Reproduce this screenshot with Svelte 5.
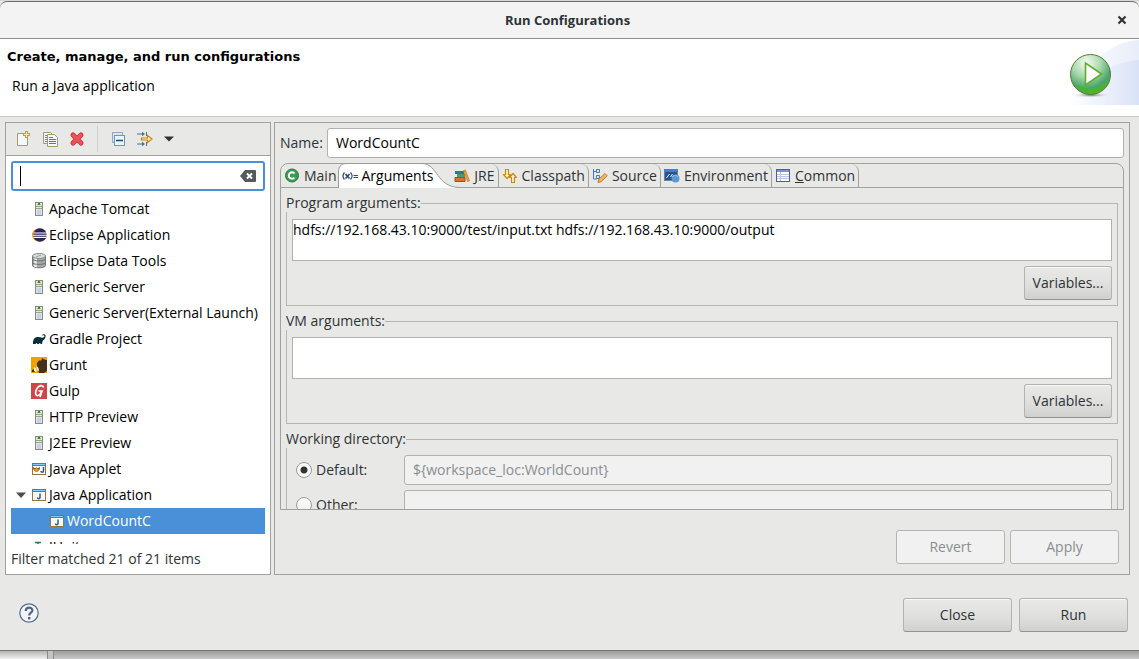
<script>
  const tree = [
    { label: 'Apache Tomcat', icon: 'server' },
    { label: 'Eclipse Application', icon: 'eclipse' },
    { label: 'Eclipse Data Tools', icon: 'database' },
    { label: 'Generic Server', icon: 'server' },
    { label: 'Generic Server(External Launch)', icon: 'server' },
    { label: 'Gradle Project', icon: 'gradle' },
    { label: 'Grunt', icon: 'grunt' },
    { label: 'Gulp', icon: 'gulp' },
    { label: 'HTTP Preview', icon: 'server' },
    { label: 'J2EE Preview', icon: 'server' },
    { label: 'Java Applet', icon: 'applet' },
    { label: 'Java Application', icon: 'java', open: true },
    { label: 'WordCountC', icon: 'java', child: true, selected: true },
    { label: 'JUnit', icon: 'junit' }
  ];
  const tabs = [
    { label: 'Main', icon: 'main' },
    { label: 'Arguments', icon: 'args', selected: true },
    { label: 'JRE', icon: 'jre' },
    { label: 'Classpath', icon: 'classpath' },
    { label: 'Source', icon: 'source' },
    { label: 'Environment', icon: 'environment' },
    { label: 'Common', icon: 'common', mnemonic: true }
  ];
  let filter = $state('');
  let name = $state('WordCountC');
  let programArgs = $state('hdfs://192.168.43.10:9000/test/input.txt hdfs://192.168.43.10:9000/output');
  let vmArgs = $state('');
  let directory = $state('default');
</script>

{#snippet icon(kind)}
  <svg class="icon" width="16" height="16" viewBox="0 0 16 16" aria-hidden="true">
    {#if kind === 'server'}
      <rect x="4.500" y="1.500" width="7" height="13" fill="#e4e6dc" stroke="#86906f" />
      <path d="M5 5.500h6M5 7.500h6" stroke="#98a08a" />
      <path d="M6 3.500h4" stroke="#a8ada0" />
      <rect x="7" y="2" width="2" height="2" fill="#12a02c" />
      <rect x="6" y="9" width="4" height="5" fill="#c3cff5" />
    {:else if kind === 'eclipse'}
      <circle cx="7.500" cy="8" r="6.500" fill="#f7941e" />
      <circle cx="9" cy="8" r="6.700" fill="#2c2255" />
      <path d="M2.500 6h13M2 8.200h14M2.500 10.400h13" stroke="#fff" stroke-width="1.100" />
    {:else if kind === 'database'}
      <path d="M1.500 3v9.500c0 3 13 3 13 0V3" fill="#a8a8a8" stroke="#777" />
      <path d="M4.500 5v9" stroke="#eee" stroke-width="2.500" />
      <path d="M1.500 6c0 2.500 13 2.500 13 0M1.500 9.500c0 2.500 13 2.500 13 0" fill="none" stroke="#6f6f6f" />
      <ellipse cx="8" cy="3" rx="6.500" ry="2.500" fill="#d8dedb" stroke="#8b8b8b" />
      <path d="M5 4l5-2" stroke="#74b5a5" />
    {:else if kind === 'gradle'}
      <path d="M2 13c-.3-4 1-6.500 4-7 2-.3 3.500.2 5 .8 2-.3 3-1.300 2.200-2.400-.5-.5-1.200-.2-1.500.2l-.7-.6c1-1.400 3.500-1.100 3.600.9 0 2.700-1.600 3.600-3 5.100-.4 1-.3 2-.6 3H9.600c-.2-1.400-1.400-1.400-1.600 0H6.300c-.2-1.400-1.400-1.400-1.600 0z" fill="#02303a" />
    {:else if kind === 'grunt'}
      <rect width="16" height="16" fill="#eda300" />
      <path d="M16 3v11l-3 2H8L6 10V6l2-2.500 2 0L11.500 1l1.500 1.500z" fill="#46301a" />
      <path d="M1 13l2-1 1 3H1z" fill="#46301a" />
      <path d="M3 10l2 1.500.5 3.500-2.500-1zM5.500 9c2 1 3 3.500 2 5.500l-1.500-2z" fill="#fff4d8" />
    {:else if kind === 'gulp'}
      <rect width="16" height="16" fill="#cf4646" />
      <path d="M12.500 4.500C12 1.500 8 2 6 5.500c-2.500 4-1.500 7.500 1 7 2-.4 3-2.500 4-4.500H7.500M11 8l-2 6" fill="none" stroke="#fff" stroke-width="1.700" />
    {:else if kind === 'java'}
      <rect x="1.500" y="2.500" width="13" height="11" fill="#f5faff" stroke="#937838" />
      <path d="M1 2h14v3H1z" fill="#2f86cf" /><path d="M2 3.500h12" stroke="#8bc8f5" />
      <path d="M9 6.500v4c0 1.500-2.500 1.500-2.500 0" fill="none" stroke="#21618f" stroke-width="1.500" />
    {:else if kind === 'applet'}
      <rect x="1.500" y="2.500" width="13" height="11" fill="#f5faff" stroke="#937838" />
      <path d="M1 2h14v3H1z" fill="#2f86cf" /><path d="M2 3.500h12" stroke="#8bc8f5" />
      <path d="M12.500 6v4c0 1.500-2.500 1.500-2.500 0" fill="none" stroke="#21618f" stroke-width="1.500" />
      <path d="M2.500 6.500c0 5 6 5 6 0l-1.500 1.500-1.500-1-1.500 1z" fill="#f5b429" stroke="#85500e" />
    {:else if kind === 'junit'}
      <path d="M4 3.500h6M7 3v9" stroke="#1c8050" stroke-width="1.500" />
    {:else if kind === 'main'}
      <circle cx="8" cy="7.500" r="6.500" fill="#3a9a50" stroke="#23793e" />
      <path d="M10.500 5.500a3.200 3.200 0 1 0 0 4" fill="none" stroke="#fff" stroke-width="2" />
    {:else if kind === 'args'}
      <path d="M2.500 4.500c-2 2-2 5 0 7M8.500 4.500c2 2 2 5 0 7" fill="none" stroke="#314a7c" stroke-width="1.300" />
      <path d="M3.500 6l4 4.500M7.500 6l-4 4.500" stroke="#314a7c" stroke-width="1.700" />
      <path d="M11.500 7.500H16M11.500 9.500H16" stroke="#314a7c" />
    {:else if kind === 'jre'}
      <path d="M1 3h9v3H1z" fill="#27789a" /><path d="M3 6h8v3H3z" fill="#4a9a6c" />
      <path d="M1 9.500h10v4H1z" fill="#d96f32" stroke="#9f4c22" />
      <path d="M9.500 2.500l2-.5 4 11-2 .5z" fill="#f0a02e" stroke="#c0761f" stroke-width=".6" />
    {:else if kind === 'classpath'}
      <path d="M3.500 1.500h3v5h2L5 10.500 1.500 6.500h2zM9.500 14.500h3v-5h2L11 5.500 7.500 9.500h2z" fill="#fff0b8" stroke="#c48a1c" stroke-width="1.200" stroke-linejoin="round" />
    {:else if kind === 'source'}
      <path d="M1.500 1v10H5M1.500 3.500H5" fill="none" stroke="#4b76b5" />
      <path d="M4.500 1.500h3v3h-3zM4.500 7.500h3v3h-3z" fill="#dbe9fb" stroke="#4b76b5" />
      <path d="M6 14.500l1-3.500 6-5.500 2.200 2.200-6 6z" fill="#f2b563" stroke="#c27a2d" />
    {:else if kind === 'environment'}
      <rect x=".5" y="1.500" width="13" height="11" fill="#28538b" stroke="#6f8195" />
      <path d="M0 1h14v3H0z" fill="#477fc1" /><path d="M2.500 10l3-4M6.500 9l2-3" stroke="#e2edf8" />
      <circle cx="11.500" cy="10.500" r="4" fill="#5d96d2" /><path d="M8 9c2-2 5-2 6 0" fill="none" stroke="#9cc5eb" />
    {:else if kind === 'common'}
      <rect x="1.500" y="1.500" width="13" height="12" fill="#fff" stroke="#4c608e" />
      <path d="M2 2h12v2H2z" fill="#7c96c4" /><path d="M2 6.500h12M2 8.500h12M2 10.500h12M5.500 4v9" stroke="#b9c6dd" />
    {:else if kind === 'new'}
      <path d="M2.500 2.500h7l3 3v9h-10z" fill="#f3f8ff" stroke="#a99a6b" />
      <path d="M11.500 0v7M8 3.500h7" stroke="#c89f36" stroke-width="3" /><path d="M11.500 1v5M9 3.500h5" stroke="#fff3b8" />
    {:else if kind === 'copy'}
      <path d="M1.500 1.500h7l2 2v9h-9z" fill="#f3f8ff" stroke="#a99a6b" /><path d="M3 4.500h3M3 6.500h3M3 8.500h3M3 10.500h3" stroke="#6384ad" />
      <path d="M5.500 3.500h7l3 3v9h-10z" fill="#f3f8ff" stroke="#a99a6b" /><path d="M7 6.500h4M7 8.500h7M7 10.500h7M7 12.500h7" stroke="#57779f" />
    {:else if kind === 'delete'}
      <path d="M4 4l8 8M12 4l-8 8" stroke="#c92f38" stroke-width="5" stroke-linecap="round" /><path d="M4 4l8 8M12 4l-8 8" stroke="#ec5359" stroke-width="3.200" stroke-linecap="round" />
    {:else if kind === 'collapse'}
      <rect x="2.500" y="1.500" width="10" height="10" fill="#dbe5f4" stroke="#92a8c8" />
      <rect x="4.500" y="4.500" width="10" height="10" fill="#e9f8ff" stroke="#7792b8" /><path d="M6 9.500h7" stroke="#164d7c" stroke-width="1.500" />
    {:else if kind === 'filter'}
      <path d="M0 3h6M0 13h6" stroke="#46708d" /><path d="M5 .8L8 3 5 5.200zM5 10.800L8 13l-3 2.200z" fill="#46708d" /><path d="M9.500 1v4M9.500 11v4" stroke="#46708d" />
      <path d="M4.500 7h6V4.500L15 8l-4.500 3.500V9h-6z" fill="#fff0af" stroke="#c4851b" stroke-width="1.200" />
    {/if}
  </svg>
{/snippet}

<div class="screen">
  <main class="window">
    <header class="titlebar">
      <h1>Run Configurations</h1>
      <button class="close" aria-label="Close window"><svg width="10" height="10" viewBox="0 0 10 10" aria-hidden="true"><path d="M1.500 1.500l7 7M8.500 1.500l-7 7" stroke="#2e3436" stroke-width="2.200" /></svg></button>
    </header>

    <section class="banner">
      <div class="banner-text">
        <h2>Create, manage, and run configurations</h2>
        <p>Run a Java application</p>
      </div>
      <svg class="banner-art" width="75" height="66" viewBox="0 0 75 66" aria-hidden="true">
        <defs>
          <linearGradient id="sky"><stop offset="0" stop-color="#fff" /><stop offset="1" stop-color="#d5dff5" /></linearGradient>
          <radialGradient id="ball" cx=".4" cy=".2" r=".8"><stop offset="0" stop-color="#f4fbef" /><stop offset=".45" stop-color="#a8d8ac" /><stop offset=".8" stop-color="#4ba56a" /><stop offset="1" stop-color="#4fb52e" /></radialGradient>
          <radialGradient id="shade"><stop offset="0" stop-color="#75656f" /><stop offset="1" stop-color="#fff" stop-opacity="0" /></radialGradient>
        </defs>
        <path d="M4 66C15 30 45 2 75 1v65z" fill="url(#sky)" opacity=".55" />
        <path d="M4 66C28 36 50 22 75 21v45z" fill="url(#sky)" opacity=".8" />
        <ellipse cx="27" cy="56" rx="20" ry="3" fill="url(#shade)" />
        <circle cx="26.500" cy="35.500" r="20" fill="url(#ball)" stroke="#587c2f" />
        <path d="M10 43a18 18 0 0 0 33 0c-8 9-25 9-33 0z" fill="#43b91f" opacity=".65" />
        <path d="M21.500 24v22l16-11z" fill="#fff" stroke="#5cae2b" stroke-width="1.600" />
      </svg>
    </section>

    <div class="panels">
      <section class="sidebar">
        <div class="toolbar">
          <button aria-label="New launch configuration">{@render icon('new')}</button>
          <button aria-label="Duplicate">{@render icon('copy')}</button>
          <button aria-label="Delete">{@render icon('delete')}</button>
          <span class="divider"></span>
          <button aria-label="Collapse all">{@render icon('collapse')}</button>
          <button aria-label="Filter">{@render icon('filter')}</button>
          <button class="menu" aria-label="Filter menu"><svg width="10" height="6" viewBox="0 0 10 6" aria-hidden="true"><path d="M0 .5h10L5 5.500z" fill="#2e3436" /></svg></button>
        </div>
        <div class="search">
          <input aria-label="Filter configurations" bind:value={filter} />
          <span class="caret"></span>
          <button aria-label="Clear filter" onclick={() => (filter = '')}><svg width="16" height="12" viewBox="0 0 16 12" aria-hidden="true"><path d="M5 0h10q1 0 1 1v10q0 1-1 1H5L0 6z" fill="#555b5c" /><path d="M7 3.500l5 5M12 3.500l-5 5" stroke="#fff" stroke-width="2" /></svg></button>
        </div>
        <ul class="tree" role="tree">
          {#each tree as item}
            <li role="treeitem" aria-selected={!!item.selected} class:child={item.child} class:selected={item.selected}>
              <span class="twisty">{#if item.open}<svg width="10" height="6" viewBox="0 0 10 6" aria-hidden="true"><path d="M0 .5h10L5 6z" fill="#4d4d4d" /></svg>{/if}</span>
              {@render icon(item.icon)}<span>{item.label}</span>
            </li>
          {/each}
        </ul>
        <p class="status">Filter matched 21 of 21 items</p>
      </section>

      <section class="editor">
        <div class="name-row">
          <label for="name">Name:</label>
          <input id="name" class="field" bind:value={name} />
        </div>
        <div class="folder">
          <div class="tabs" role="tablist">
            {#each tabs as tab}
              <button role="tab" aria-selected={!!tab.selected} class:selected={tab.selected}>
                {#if tab.selected}
                  <svg class="curve" width="122" height="25" viewBox="0 0 122 25" aria-hidden="true"><path d="M0 25V8Q1 .5 8 .5H84C100 .5 98 24.500 122 24.500V25z" fill="#fff" /><path d="M.5 25V8Q1 .5 8 .5H84C100 .5 98 24.500 122 24.500" fill="none" stroke="#9b9b98" /></svg>
                {/if}
                {@render icon(tab.icon)}<span>{#if tab.mnemonic}<u>C</u>ommon{:else}{tab.label}{/if}</span>
              </button>
            {/each}
          </div>
          <div class="page">
            <fieldset>
              <legend><label for="program">Program arguments:</label></legend>
              <textarea id="program" bind:value={programArgs}></textarea>
              <button class="push small">Variables...</button>
            </fieldset>
            <fieldset>
              <legend><label for="vm">VM arguments:</label></legend>
              <textarea id="vm" bind:value={vmArgs}></textarea>
              <button class="push small">Variables...</button>
            </fieldset>
            <fieldset>
              <legend>Working directory:</legend>
              <div class="choice">
                <label><input type="radio" name="dir" value="default" bind:group={directory} />Default:</label>
                <input class="field" aria-label="Default directory" value={'${workspace_loc:WorldCount}'} disabled />
              </div>
              <div class="choice">
                <label><input type="radio" name="dir" value="other" bind:group={directory} />Other:</label>
                <input class="field" aria-label="Other directory" disabled />
              </div>
            </fieldset>
          </div>
        </div>
        <div class="actions">
          <button class="push" disabled>Revert</button>
          <button class="push" disabled>Apply</button>
        </div>
      </section>
    </div>

    <footer>
      <button class="help" aria-label="Help"><svg width="20" height="20" viewBox="0 0 20 20" aria-hidden="true"><circle cx="10" cy="10" r="9.200" fill="#f2f4f8" stroke="#566c8d" stroke-width="1.200" /><path d="M6.800 8c0-4.500 6.600-4.300 6.600-.6 0 2.300-3.200 2.300-3.200 5" fill="none" stroke="#4b648b" stroke-width="2.200" /><rect x="9" y="14" width="2.400" height="2.400" fill="#4b648b" /></svg></button>
      <div class="footer-buttons">
        <button class="push">Close</button>
        <button class="push">Run</button>
      </div>
    </footer>
  </main>
  <div class="backdrop"><span></span></div>
</div>

<style>
  :global(body) { margin: 0; background: #c8c8c8; }
  .screen { height: 100vh; display: flex; flex-direction: column; font: 14px/18px "Open Sans", "Noto Sans", sans-serif; color: #2e3436; }
  .screen :where(*) { box-sizing: border-box; }
  button, input, textarea { font: inherit; color: inherit; margin: 0; }
  button { border: 0; background: none; padding: 0; }
  h1, h2, p, ul { margin: 0; padding: 0; }
  .window { flex: 1; min-height: 0; display: flex; flex-direction: column; background: #e8e8e6; border-top: 1px solid #d8d8d6; border-bottom: 1px solid #777; }
  .titlebar { height: 38px; flex: none; display: grid; grid-template-columns: 30px 1fr 34px; align-items: center; background: #f3f3f3; border-top: 1px solid #6c6c6a; border-bottom: 1px solid #8f8f88; border-radius: 7px 7px 0 0; }
  h1 { grid-column: 2; text-align: center; font-size: 13px; line-height: 18px; font-weight: 700; }
  .close { display: grid; place-items: center; height: 30px; }
  .banner { flex: none; height: 78px; background: #fff; border-bottom: 1px solid #ccc; display: flex; justify-content: space-between; color: #000; }
  .banner-text { padding: 9px 7px; }
  h2 { font: bold 13px/18px "DejaVu Sans", sans-serif; }
  .banner p { padding: 11px 5px; }
  .icon, svg { flex: none; display: block; }
  .panels { flex: 1; min-height: 0; display: flex; gap: 3px; padding: 5px 9px 0 5px; }
  .sidebar { width: 266px; flex: none; display: flex; flex-direction: column; border: 1px solid #a1a19e; background: #fff; }
  .toolbar { height: 33px; flex: none; display: flex; align-items: center; gap: 11px; padding: 0 9px 1px; background: #e8e8e6; border-bottom: 1px solid #a1a19e; }
  .divider { width: 1px; height: 26px; margin: 0 1px; background: #d1d1cf; }
  .search { position: relative; flex: none; margin: 5px; display: flex; }
  .search input { flex: 1; min-width: 0; height: 30px; border: 2px solid #4a90d9; border-radius: 3px; padding: 0 30px 0 8px; outline: 0; background: #fff; }
  .search button { position: absolute; right: 9px; top: 9px; }
  .caret { position: absolute; left: 9px; top: 5px; width: 1px; height: 20px; background: #000; }
  .tree { flex: 1; min-height: 0; overflow: hidden; margin: 0 5px; list-style: none; color: #000; }
  .tree li { height: 26px; display: flex; align-items: center; gap: 2px; white-space: nowrap; padding-left: 4px; }
  .tree li.child { padding-left: 22px; }
  .tree li.selected { background: #4a90d9; color: #fff; }
  .twisty { width: 14px; padding-left: 1px; }
  .status { flex: none; padding: 6px 5px; }
  .editor { flex: 1; min-width: 0; display: flex; flex-direction: column; border: 1px solid #a1a19e; padding: 5px; }
  .name-row { flex: none; display: flex; align-items: center; margin-bottom: 5px; }
  .name-row label { width: 47px; }
  .field { flex: 1; min-width: 0; height: 30px; border: 1px solid #b1b1ae; border-radius: 3px; padding: 0 8px 2px; background: #fff; color: #000; }
  .field:disabled { background: #f1f1f1; color: #8b8e8f; }
  .folder { flex: 1; min-height: 0; display: flex; flex-direction: column; border: 1px solid #a1a19e; border-radius: 8px 8px 0 0; }
  .tabs { flex: none; height: 24px; display: flex; border-bottom: 1px solid #a1a19e; }
  .tabs button { position: relative; display: flex; align-items: center; gap: 4px; padding: 0 3px; border-right: 1px solid #a1a19e; border-radius: 0 8px 0 0; white-space: nowrap; }
  .tabs button:first-child { padding-right: 2px; border-right: 0; }
  .tabs button.selected { border: 0; padding-right: 18px; color: #000; }
  .tabs button > :not(.curve) { position: relative; z-index: 1; }
  .curve { position: absolute; left: -1px; top: -1px; }
  .page { flex: 1; min-height: 0; overflow: hidden; padding: 6px 5px 0; }
  fieldset { min-width: 0; margin: 0 0 6px; border: 1px solid #b5b5b2; padding: 7px 5px 5px; display: flow-root; }
  legend { margin-left: -6px; padding: 0; background: #e8e8e6; height: 18px; }
  textarea { display: block; width: 100%; height: 42px; resize: none; overflow: hidden; border: 1px solid #b1b1ae; border-radius: 0; background: #fff; color: #000; padding: 1px 0; outline: 0; }
  .push { width: 109px; height: 34px; border: 1px solid #b3b3b0; border-bottom-color: #92928f; border-radius: 3px; background: linear-gradient(#e9e9e7, #dededc 60%, #d0d0ce); box-shadow: inset 0 1px #f8f8f8; }
  .push:disabled { background: #f1f1f1; color: #8b8e8f; border-color: #b5b5b2; box-shadow: none; }
  .push.small { display: block; width: 88px; margin: 5px 0 0 auto; }
  .choice { display: flex; margin-bottom: 5px; }
  .choice label { width: 112px; display: flex; align-items: center; gap: 4px; padding-left: 4px; }
  .choice input[type='radio'] { appearance: none; width: 16px; height: 16px; border: 1px solid #9d9d98; border-radius: 50%; background: linear-gradient(#fff, #ececea); }
  .choice input[type='radio']:checked { background: radial-gradient(circle, #2e3436 3px, #f8f8f8 4px); }
  .actions { flex: none; display: flex; justify-content: flex-end; gap: 5px; padding: 20px 5px 5px; }
  footer { flex: none; display: flex; justify-content: space-between; align-items: flex-start; padding: 23px 11px 18px 19px; }
  .help { padding: 5px 0; }
  .footer-buttons { display: flex; gap: 7px; }
  .backdrop { flex: none; height: 8px; background: linear-gradient(#9c9c9c, #c8c8c8); }
  .backdrop span { display: block; width: 54px; height: 8px; border-right: 1px solid #8c8c8c; background: linear-gradient(90deg, transparent 47px, #8c8c8c 47px, #8c8c8c 48px, #c4c4c4 48px), linear-gradient(#b4b4b4, #f0f0f0); }
</style>
